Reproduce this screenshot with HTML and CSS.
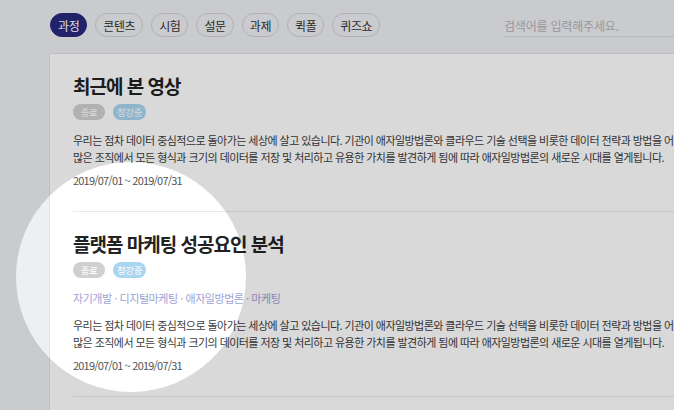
FILE: index.html
```html
<!DOCTYPE html>
<html lang="ko">
<head>
<meta charset="utf-8">
<link rel="stylesheet" href="styles.css">
</head>
<body>
<div class="page">
  <header class="topbar">
    <nav class="tabs">
      <span class="tab active">과정</span>
      <span class="tab">콘텐츠</span>
      <span class="tab">시험</span>
      <span class="tab">설문</span>
      <span class="tab">과제</span>
      <span class="tab">퀵폴</span>
      <span class="tab">퀴즈쇼</span>
    </nav>
    <div class="search">검색어를 입력해주세요.</div>
  </header>
  <main class="card">
    <section class="item">
      <h2 class="title">최근에 본 영상</h2>
      <div class="badges"><span class="badge gray">종료</span><span class="badge blue">청강중</span></div>
      <p class="desc">우리는 점차 데이터 중심적으로 돌아가는 세상에 살고 있습니다. 기관이 애자일방법론와 클라우드 기술 선택을 비롯한 데이터 전략과 방법을 어<br>많은 조직에서 모든 형식과 크기의 데이터를 저장 및 처리하고 유용한 가치를 발견하게 됨에 따라 애자일방법론의 새로운 시대를 열게됩니다.</p>
      <div class="date">2019/07/01 ~ 2019/07/31</div>
    </section>
    <section class="item">
      <h2 class="title">플랫폼 마케팅 성공요인 분석</h2>
      <div class="badges"><span class="badge gray">종료</span><span class="badge blue">청강중</span></div>
      <div class="tags">자기개발 · 디지털마케팅 · 애자일방법론 · 마케팅</div>
      <p class="desc">우리는 점차 데이터 중심적으로 돌아가는 세상에 살고 있습니다. 기관이 애자일방법론와 클라우드 기술 선택을 비롯한 데이터 전략과 방법을 어<br>많은 조직에서 모든 형식과 크기의 데이터를 저장 및 처리하고 유용한 가치를 발견하게 됨에 따라 애자일방법론의 새로운 시대를 열게됩니다.</p>
      <div class="date">2019/07/01 ~ 2019/07/31</div>
    </section>
  </main>
  <div class="spotlight"></div>
</div>
</body>
</html>
```

FILE: styles.css
```css
* { box-sizing: border-box; }
html, body {
  margin: 0;
  padding: 0;
  overflow: hidden;
  background: #eeeff2;
}
body {
  font-family: "Noto Sans CJK KR", "Noto Sans", sans-serif;
  color: #333;
}
.page {
  position: relative;
  width: 760px;
  height: 410px;
  overflow: hidden;
}
.topbar {
  display: flex;
  align-items: flex-start;
  height: 53px;
  padding: 13px 0 0 50px;
}
.tabs {
  display: flex;
  gap: 8px;
}
.tab {
  display: flex;
  align-items: center;
  height: 24px;
  padding: 0 7px;
  border: 1px solid #d0d0d2;
  border-radius: 12px;
  font-size: 12px;
  letter-spacing: -0.4px;
  color: #333;
  white-space: nowrap;
}
.tab.active {
  background: #28297d;
  border-color: #28297d;
  color: #fff;
}
.search {
  margin-left: auto;
  width: 256px;
  height: 24px;
  padding-top: 5px;
  border-bottom: 1px solid #d6d6d8;
  font-size: 12px;
  line-height: 16px;
  letter-spacing: -0.2px;
  color: #b4b4b8;
}
.card {
  margin-left: 49px;
  background: #fff;
  border-left: 1px solid #e2e2e6;
  border-top: 1px solid #e2e2e6;
  padding: 0 0 0 23px;
  height: 400px;
}
.item {
  padding: 20px 0 22px;
  border-bottom: 1px solid #e9e9ea;
  white-space: nowrap;
}
.title {
  margin: 0;
  font-size: 19px;
  line-height: 24px;
  font-weight: 700;
  letter-spacing: -1px;
  color: #222;
}
.badges {
  display: flex;
  gap: 8px;
  margin-top: 6px;
}
.badge {
  display: flex;
  align-items: center;
  justify-content: center;
  min-width: 32px;
  height: 16px;
  padding: 0 4px;
  border-radius: 8px;
  font-size: 9.5px;
  letter-spacing: -0.4px;
  color: #fff;
}
.badge.gray { background: #d0d0d0; }
.badge.blue { background: #a8d5f0; }
.tags {
  margin-top: 12px;
  font-size: 11px;
  line-height: 17px;
  letter-spacing: -0.45px;
  color: #9ea2d8;
}
.desc {
  margin: 12px 0 0;
  font-size: 11px;
  line-height: 17px;
  letter-spacing: -0.55px;
  color: #3c3c3c;
}
.tags + .desc { margin-top: 10px; }
.date {
  margin-top: 6px;
  font-size: 11px;
  line-height: 17px;
  letter-spacing: -0.8px;
  color: #555;
}
.spotlight {
  position: absolute;
  left: 16px;
  top: 162px;
  width: 230px;
  height: 230px;
  border-radius: 50%;
  box-shadow: 0 0 0 1200px rgba(0, 0, 0, 0.15);
  pointer-events: none;
}
```
